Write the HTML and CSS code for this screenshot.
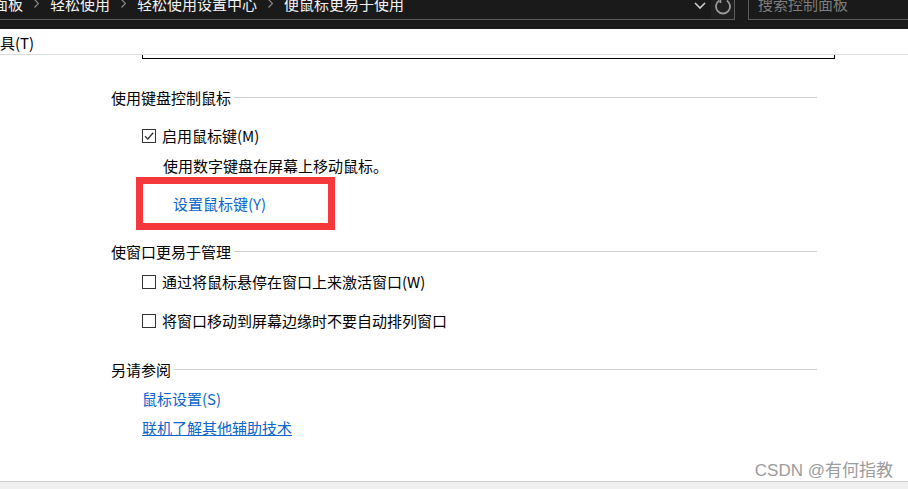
FILE: index.html
```html
<!DOCTYPE html>
<html lang="zh-CN">
<head>
<meta charset="utf-8">
<title>便鼠标更易于使用</title>
<link rel="stylesheet" href="styles.css">
</head>
<body>
<header class="titlebar">
  <div class="address">
    <div class="crumbs">
      <span class="crumb first">控制面板</span>
      <svg class="sep" width="5" height="9" viewBox="0 0 5 9"><path d="M0.5 0.5 L4.5 4.5 L0.5 8.5" fill="none" stroke="#8a8a8a" stroke-width="1.2"/></svg>
      <span class="crumb">轻松使用</span>
      <svg class="sep" width="5" height="9" viewBox="0 0 5 9"><path d="M0.5 0.5 L4.5 4.5 L0.5 8.5" fill="none" stroke="#8a8a8a" stroke-width="1.2"/></svg>
      <span class="crumb">轻松使用设置中心</span>
      <svg class="sep" width="5" height="9" viewBox="0 0 5 9"><path d="M0.5 0.5 L4.5 4.5 L0.5 8.5" fill="none" stroke="#8a8a8a" stroke-width="1.2"/></svg>
      <span class="crumb">便鼠标更易于使用</span>
    </div>
    <span class="dropdown"><svg width="12" height="7" viewBox="0 0 12 7"><path d="M1 1 L6 6 L11 1" fill="none" stroke="#cfcfcf" stroke-width="1.6"/></svg></span>
    <span class="refresh"><svg width="18" height="18" viewBox="0 0 18 18"><path d="M5.2 3.6 A7 7 0 1 0 12.8 3.6" fill="none" stroke="#9a9a9a" stroke-width="1.8"/><path d="M2.6 2.2 L6.4 2.2 L6.4 6" fill="none" stroke="#9a9a9a" stroke-width="1.8"/></svg></span>
  </div>
  <div class="search"><span class="placeholder">搜索控制面板</span></div>
</header>

<nav class="menubar"><span class="menu-item">工具(T)</span></nav>

<main class="content">
  <div class="topbox"></div>

  <section class="group g1">
    <div class="group-title"><span>使用键盘控制鼠标</span><span class="rule"></span></div>
    <label class="check c1"><span class="box"><svg width="12" height="12" viewBox="0 0 12 12"><path d="M2 6.2 L4.8 9 L10.2 2.8" fill="none" stroke="#333" stroke-width="1.3"/></svg></span><span>启用鼠标键(M)</span></label>
    <p class="desc">使用数字键盘在屏幕上移动鼠标。</p>
    <div class="highlight"><a class="link" href="#">设置鼠标键(Y)</a></div>
  </section>

  <section class="group g2">
    <div class="group-title"><span>使窗口更易于管理</span><span class="rule"></span></div>
    <label class="check c2"><span class="box"></span><span>通过将鼠标悬停在窗口上来激活窗口(W)</span></label>
    <label class="check c3"><span class="box"></span><span>将窗口移动到屏幕边缘时不要自动排列窗口</span></label>
  </section>

  <section class="group g3">
    <div class="group-title"><span>另请参阅</span><span class="rule"></span></div>
    <a class="link see l1" href="#">鼠标设置(S)</a>
    <a class="link see l2 underline" href="#">联机了解其他辅助技术</a>
  </section>
</main>

<footer class="statusbar"></footer>
<div class="watermark">CSDN @有何指教</div>
</body>
</html>
```

FILE: styles.css
```css
* { box-sizing: border-box; }

html, body {
  margin: 0;
  padding: 0;
}

body {
  width: 908px;
  height: 489px;
  overflow: hidden;
  position: relative;
  display: flex;
  flex-direction: column;
  background: #ffffff;
  color: #000000;
  font-family: "Noto Sans CJK SC", "Liberation Sans", sans-serif;
  font-size: 15px;
}

/* ---------- title bar ---------- */
.titlebar {
  flex: none;
  height: 29px;
  background: #1a1a1a;
  display: flex;
  gap: 13px;
  overflow: hidden;
}

.address {
  width: 735px;
  height: 20px;
  border-right: 1px solid #5c5c5c;
  border-bottom: 1px solid #5c5c5c;
  display: flex;
  align-items: flex-end;
}

.crumbs {
  flex: 1;
  display: flex;
  align-items: center;
  height: 15px;
  margin-bottom: 8px;
  color: #f2f2f2;
  line-height: 15px;
  white-space: nowrap;
}

.crumb.first { margin-left: -37px; }

.sep {
  margin: 0 11px;
  flex: none;
}

.dropdown {
  width: 17px;
  height: 19px;
  display: flex;
  align-items: center;
  justify-content: flex-start;
  padding-bottom: 8px;
  margin-right: 0;
}

.refresh {
  width: 23px;
  height: 19px;
  background: #202020;
  display: flex;
  justify-content: center;
  align-items: flex-end;
  padding-bottom: 4px;
}

.refresh svg { flex: none; }

.search {
  flex: 1;
  height: 20px;
  border-left: 1px solid #5c5c5c;
  border-bottom: 1px solid #5c5c5c;
  display: flex;
  align-items: flex-end;
  padding-left: 9px;
}

.placeholder {
  color: #7d7d7d;
  line-height: 15px;
  margin-bottom: 8px;
  white-space: nowrap;
}

/* ---------- menu bar ---------- */
.menubar {
  flex: none;
  height: 26px;
  padding-top: 3px;
  border-bottom: 1px solid #dcdcdc;
  line-height: 22px;
  overflow: hidden;
}

.menu-item {
  display: inline-block;
  margin-left: -15px;
}

/* ---------- content ---------- */
.content {
  flex: 1;
  display: flex;
  flex-direction: column;
}

.topbox {
  margin-left: 142px;
  width: 693px;
  height: 4px;
  border: 1px solid #000;
  border-top: none;
}

.group {
  margin-left: 111px;
  width: 706px;
  display: flex;
  flex-direction: column;
  align-items: flex-start;
}

.g1 { margin-top: 29px; }
.g2 { margin-top: 12px; }
.g3 { margin-top: 29px; }

.group-title {
  align-self: stretch;
  display: flex;
  align-items: center;
  gap: 3px;
  line-height: 20px;
  white-space: nowrap;
}

.rule {
  flex: 1;
  height: 1px;
  background: #cfcfcf;
  margin-top: -2px;
}

.check {
  display: flex;
  align-items: center;
  gap: 6px;
  margin-left: 31px;
  line-height: 20px;
}

.c1 { margin-top: 18px; }
.c2 { margin-top: 10px; }
.c3 { margin-top: 19px; }

.box {
  width: 14px;
  height: 14px;
  border: 1px solid #333333;
  background: #ffffff;
  display: flex;
  align-items: center;
  justify-content: center;
  margin-top: -1px;
}

.desc {
  margin: 10px 0 0 52px;
  line-height: 20px;
}

.highlight {
  margin: 1px 0 0 25px;
  width: 199px;
  height: 53px;
  border: 7px solid #f5383b;
  padding-left: 30px;
  line-height: 39px;
}

.link {
  color: #0a66cc;
  text-decoration: none;
  line-height: inherit;
}

.see {
  margin-left: 31px;
  line-height: 20px;
  margin-top: 9px;
}

.underline { text-decoration: underline; }

/* ---------- footer ---------- */
.statusbar {
  flex: none;
  height: 8px;
  border-top: 1px solid #cccccc;
  background: #f0f0f0;
}

.watermark {
  position: absolute;
  right: 15px;
  top: 460px;
  line-height: 22px;
  font-size: 17px;
  color: #9c9c9c;
  font-family: "Liberation Sans", "Noto Sans CJK SC", sans-serif;
  white-space: nowrap;
}
```
